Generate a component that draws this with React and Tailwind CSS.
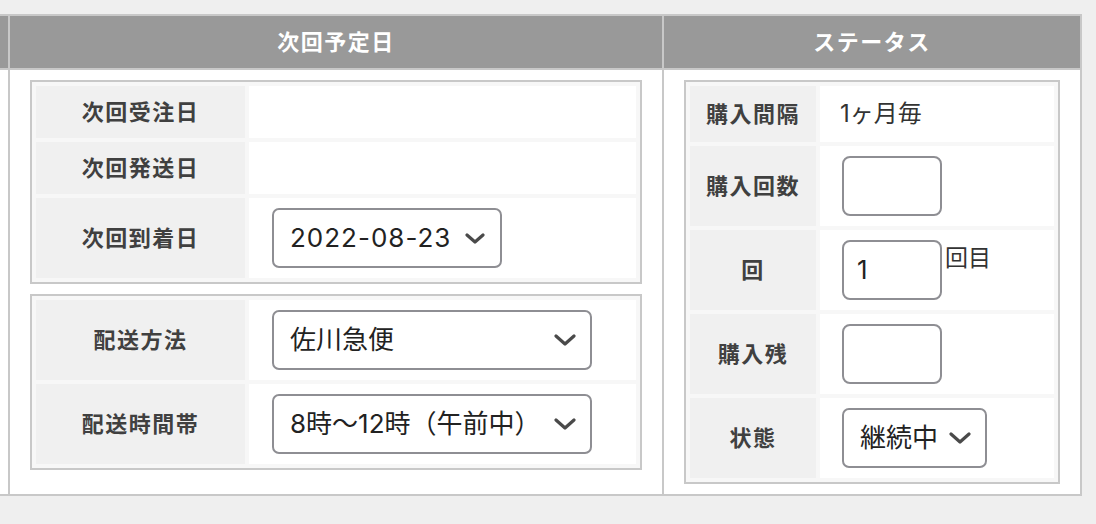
const jp = { fontFamily: "Inter, 'Noto Sans CJK JP', sans-serif" };

function Chevron({ w = 22, h = 12 }) {
  return (
    <svg width={w} height={h} viewBox={`0 0 ${w} ${h}`} fill="none">
      <polyline points={`2,2 ${w / 2},${h - 2} ${w - 2},2`} stroke="#4a4a4a" strokeWidth="3.2" strokeLinecap="round" strokeLinejoin="round" />
    </svg>
  );
}

function Select({ value, width, pr, cw, ch, track = "" }) {
  return (
    <div
      className={`flex items-center justify-between h-[60px] border-2 border-[#8e8e93] rounded-[7px] bg-white pl-[16px] text-[26px] text-[#222] ${width} ${pr}`}
    >
      <span className={`leading-none whitespace-nowrap ${track}`}>{value}</span>
      <Chevron w={cw} h={ch} />
    </div>
  );
}

function Input({ value }) {
  return (
    <div className="flex items-center w-[100px] h-[60px] border-2 border-[#8e8e93] rounded-[8px] bg-white pl-[13px] text-[26px] text-[#222] leading-none">
      {value}
    </div>
  );
}

function Row({ label, h, lw, pl = "pl-[22px]", children }) {
  return (
    <div className={`flex gap-[4px] ${h}`}>
      <div className={`${lw} shrink-0 bg-[#f0f0f0] flex items-center justify-center text-[22px] font-bold text-[#404040] tracking-[1.5px]`}>
        {label}
      </div>
      <div className={`flex-1 bg-white flex items-center ${pl}`}>{children}</div>
    </div>
  );
}

function Box({ children }) {
  return <div className="border-2 border-[#c8c8c8] bg-[#f7f7f7] p-[4px] flex flex-col gap-[4px]">{children}</div>;
}

export default function App() {
  return (
    <div className="min-h-screen bg-[#efefef] pt-[14px]" style={jp}>
      <div className="flex w-[1082px] border-t-2 border-r-2 border-b-2 border-[#c8c8c8] bg-white">
        <div className="w-[8px] shrink-0">
          <div className="h-[54px] bg-[#999] border-b-2 border-[#c8c8c8]" />
        </div>

        <div className="w-[654px] shrink-0 border-l-2 border-[#c8c8c8]">
          <div className="h-[54px] bg-[#999] border-b-2 border-[#c8c8c8] flex items-center justify-center text-white font-bold text-[22px] tracking-[1.5px]">
            次回予定日
          </div>
          <div className="px-[20px] pt-[10px] flex flex-col gap-[10px]">
            <Box>
              <Row label="次回受注日" h="h-[52px]" lw="w-[209px]" pl="pl-[23px]" />
              <Row label="次回発送日" h="h-[52px]" lw="w-[209px]" pl="pl-[23px]" />
              <Row label="次回到着日" h="h-[80px]" lw="w-[209px]" pl="pl-[23px]">
                <Select value="2022-08-23" width="w-[230px]" pr="pr-[15px]" cw={20} ch={11} track="tracking-[1px]" />
              </Row>
            </Box>
            <Box>
              <Row label="配送方法" h="h-[80px]" lw="w-[209px]" pl="pl-[23px]">
                <Select value="佐川急便" width="w-[320px]" pr="pr-[14px]" cw={22} ch={12} />
              </Row>
              <Row label="配送時間帯" h="h-[80px]" lw="w-[209px]" pl="pl-[23px]">
                <Select value="8時〜12時（午前中）" width="w-[320px]" pr="pr-[14px]" cw={22} ch={12} />
              </Row>
            </Box>
          </div>
        </div>

        <div className="w-[418px] shrink-0 border-l-2 border-[#c8c8c8]">
          <div className="h-[54px] bg-[#999] border-b-2 border-[#c8c8c8] flex items-center justify-center text-white font-bold text-[22px] tracking-[1.5px]">
            ステータス
          </div>
          <div className="px-[20px] py-[10px]">
            <Box>
              <Row label="購入間隔" h="h-[56px]" lw="w-[126px]">
                <span className="text-[24px] text-[#333] -ml-[2px]">1ヶ月毎</span>
              </Row>
              <Row label="購入回数" h="h-[80px]" lw="w-[126px]">
                <Input value="" />
              </Row>
              <Row label="回" h="h-[80px]" lw="w-[126px]">
                <div className="flex items-start">
                  <Input value="1" />
                  <span className="ml-[3px] mt-[7px] text-[23px] leading-none text-[#333]">回目</span>
                </div>
              </Row>
              <Row label="購入残" h="h-[80px]" lw="w-[126px]">
                <Input value="" />
              </Row>
              <Row label="状態" h="h-[80px]" lw="w-[126px]">
                <Select value="継続中" width="w-[145px]" pr="pr-[14px]" cw={22} ch={12} />
              </Row>
            </Box>
          </div>
        </div>
      </div>
    </div>
  );
}
